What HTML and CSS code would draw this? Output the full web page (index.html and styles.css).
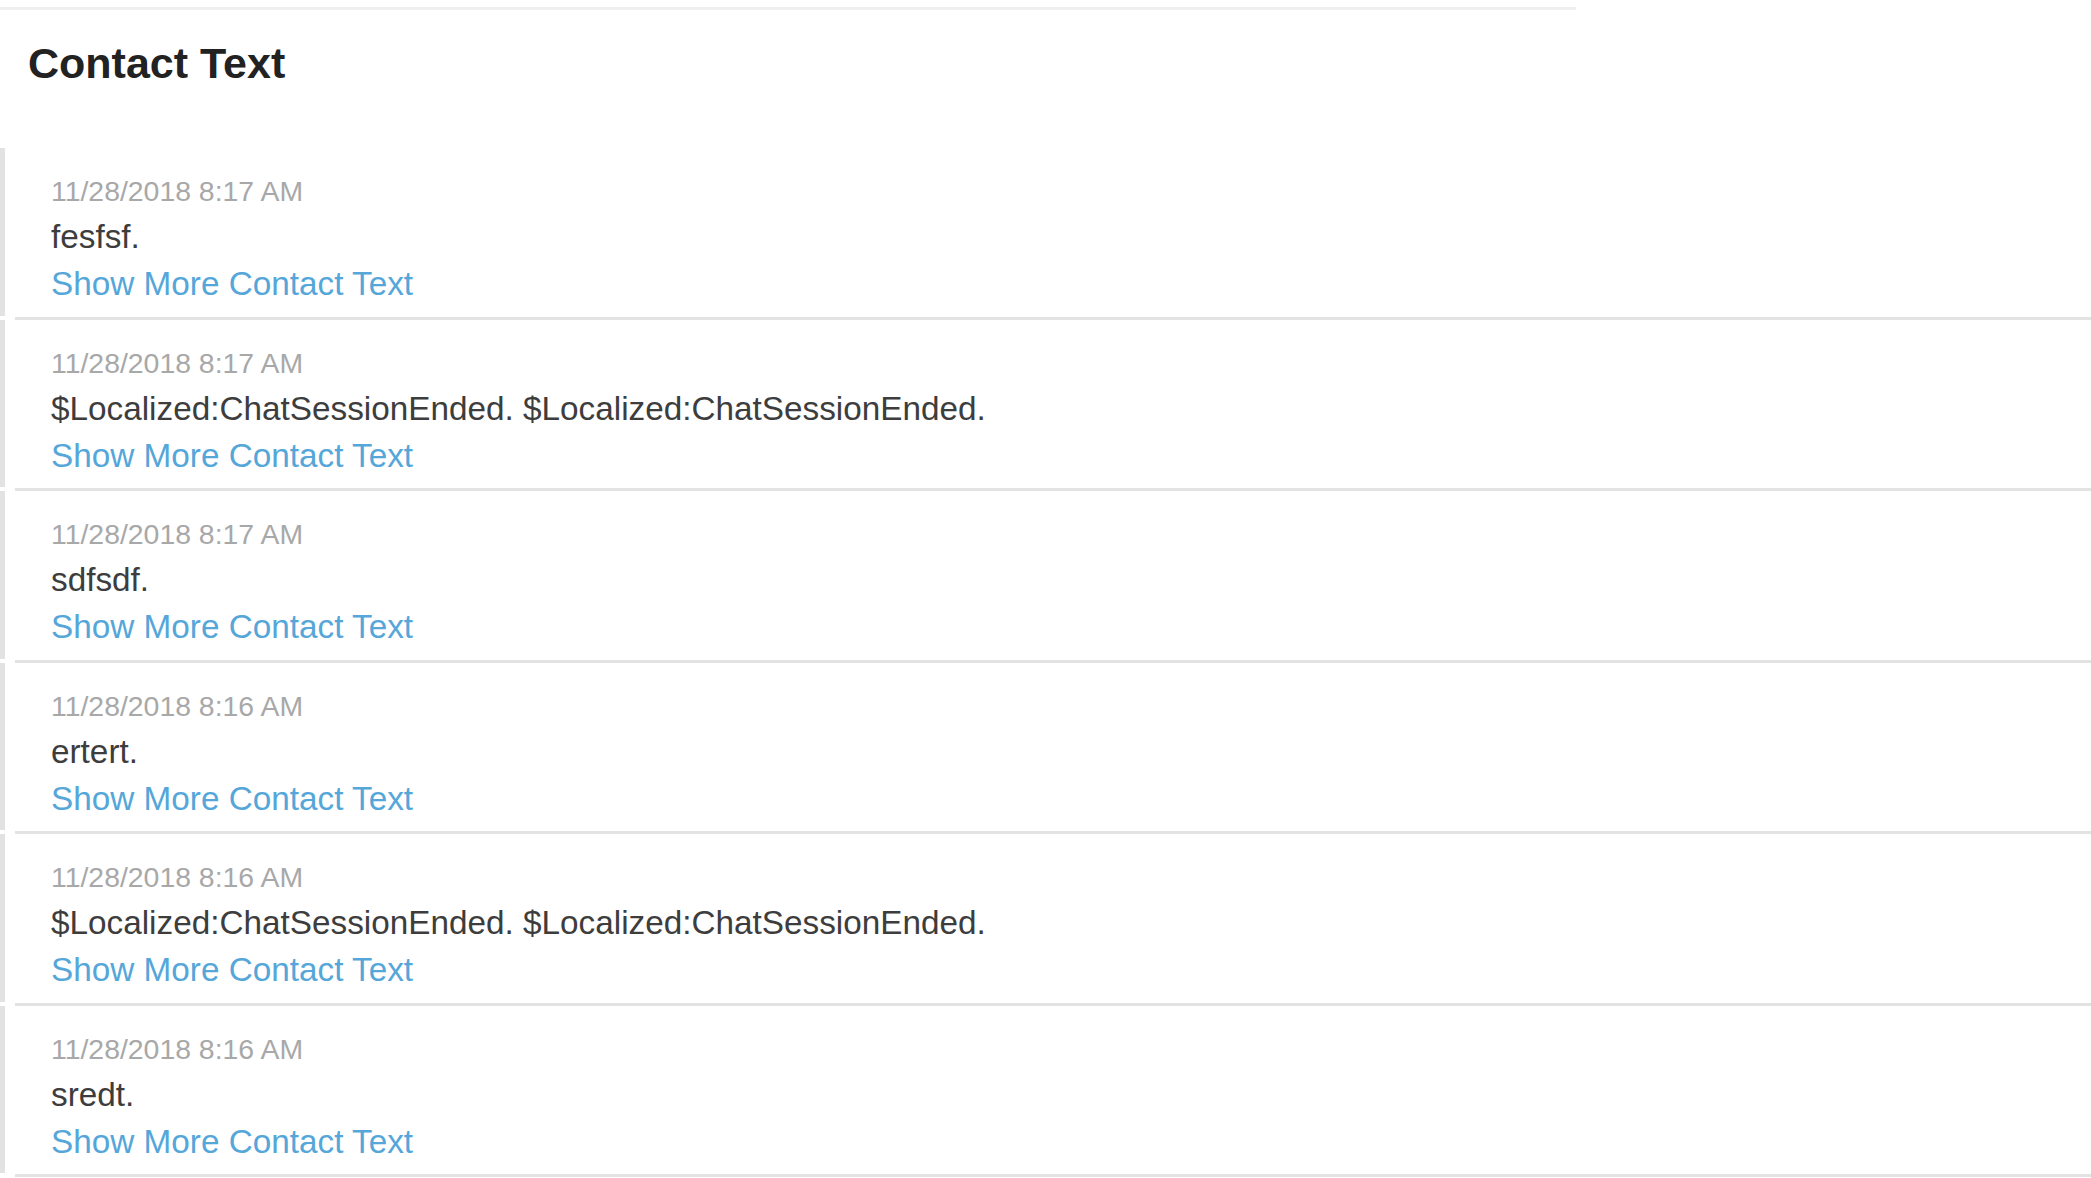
FILE: index.html
```html
<!DOCTYPE html>
<html lang="en">
<head>
  <meta charset="UTF-8">
  <meta name="viewport" content="width=device-width, initial-scale=1.0">
  <title>Contact Text</title>
  <link rel="stylesheet" href="styles.css">
</head>
<body>
  <div class="top-rule"></div>
  <h1 class="page-title">Contact Text</h1>

  <!-- lista de textos de contato -->
  <ul class="contact-list">
    <li>
      <div class="entry">
        <div class="entry-date">11/28/2018 8:17 AM</div>
        <div class="entry-text">fesfsf.</div>
        <a class="entry-link" href="#">Show More Contact Text</a>
      </div>
      <div class="entry-rule"></div>
    </li>
    <li>
      <div class="entry">
        <div class="entry-date">11/28/2018 8:17 AM</div>
        <div class="entry-text">$Localized:ChatSessionEnded. $Localized:ChatSessionEnded.</div>
        <a class="entry-link" href="#">Show More Contact Text</a>
      </div>
      <div class="entry-rule"></div>
    </li>
    <li>
      <div class="entry">
        <div class="entry-date">11/28/2018 8:17 AM</div>
        <div class="entry-text">sdfsdf.</div>
        <a class="entry-link" href="#">Show More Contact Text</a>
      </div>
      <div class="entry-rule"></div>
    </li>
    <li>
      <div class="entry">
        <div class="entry-date">11/28/2018 8:16 AM</div>
        <div class="entry-text">ertert.</div>
        <a class="entry-link" href="#">Show More Contact Text</a>
      </div>
      <div class="entry-rule"></div>
    </li>
    <li>
      <div class="entry">
        <div class="entry-date">11/28/2018 8:16 AM</div>
        <div class="entry-text">$Localized:ChatSessionEnded. $Localized:ChatSessionEnded.</div>
        <a class="entry-link" href="#">Show More Contact Text</a>
      </div>
      <div class="entry-rule"></div>
    </li>
    <li>
      <div class="entry">
        <div class="entry-date">11/28/2018 8:16 AM</div>
        <div class="entry-text">sredt.</div>
        <a class="entry-link" href="#">Show More Contact Text</a>
      </div>
      <div class="entry-rule"></div>
    </li>
  </ul>
</body>
</html>
```

FILE: styles.css
```css
body {
  font-family: 'Liberation Sans', Arial, sans-serif;
  background: #fff;
  color: #3d3d3d;
  margin: 0;
  padding-top: 7px;
}
.top-rule {
  width: 1576px;
  height: 3px;
  background: #efefef;
}
.page-title {
  margin: 28px 0 0 28px;
  font-size: 43px;
  line-height: 50px;
  font-weight: bold;
  color: #222;
}
.contact-list {
  list-style: none;
  margin: 60px 0 0;
  padding: 0;
}
.entry {
  border-left: 5px solid #e2e2e2;
  padding: 22px 0 8.5px 46px;
  height: 137px;
}
.entry-date {
  font-size: 28.4px;
  line-height: 43px;
  color: #a8a8a8;
}
.entry-text {
  font-size: 33.3px;
  line-height: 47px;
  color: #3d3d3d;
}
.entry-link {
  display: block;
  font-size: 33.3px;
  line-height: 47px;
  color: #55a6d9;
  text-decoration: none;
}
.entry-link:hover {
  text-decoration: underline;
}
.entry-rule {
  margin: 1px 0 0 15px;
  height: 3px;
  background: #e3e3e3;
}
```
